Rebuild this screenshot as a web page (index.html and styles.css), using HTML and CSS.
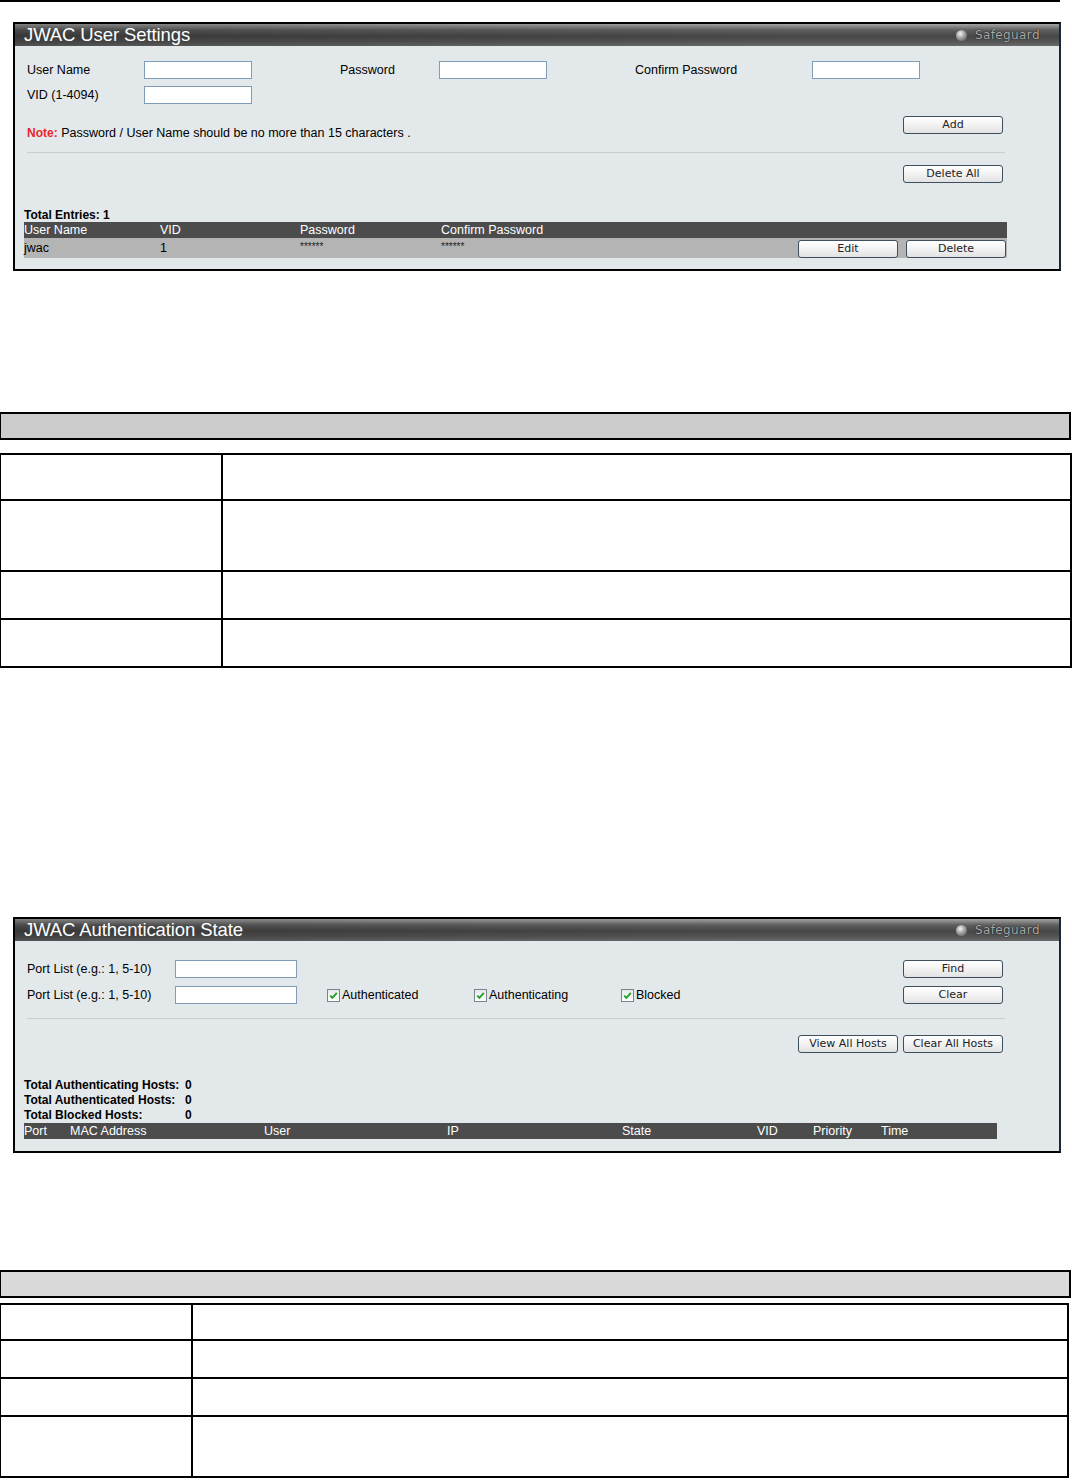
FILE: index.html
```html
<!DOCTYPE html>
<html>
<head>
<meta charset="utf-8">
<title>JWAC</title>
<link rel="stylesheet" href="styles.css">
</head>
<body>
<div class="topline"></div>

<section class="panel panel-users">
  <div class="titlebar">
    <span class="title">JWAC User Settings</span>
    <span class="safeguard"><span class="sg-dot"></span>Safeguard</span>
  </div>
  <div class="pbody">
    <div class="form-grid">
      <span class="lbl">User Name</span><span class="input"></span>
      <span class="lbl gap">Password</span><span class="input"></span>
      <span class="lbl gap">Confirm Password</span><span class="input"></span>
      <span class="lbl">VID (1-4094)</span><span class="input"></span>
    </div>
    <div class="note-row">
      <p class="note"><span class="note-key">Note:</span> Password / User Name should be no more than 15 characters .</p>
      <span class="btn">Add</span>
    </div>
    <div class="sep"></div>
    <div class="right-row first"><span class="btn">Delete All</span></div>
    <div class="total">Total Entries: 1</div>
    <div class="thead users-cols">
      <span>User Name</span><span>VID</span><span>Password</span><span>Confirm Password</span>
    </div>
    <div class="trow users-cols">
      <span>jwac</span><span>1</span><span class="stars">******</span><span class="stars">******</span>
      <span class="row-btns"><span class="btn">Edit</span><span class="btn">Delete</span></span>
    </div>
  </div>
</section>

<div class="dhead dhead-1"></div>
<div class="dtable dtable-1">
  <div class="dcell r1"></div><div class="dcell r1"></div>
  <div class="dcell r2"></div><div class="dcell r2"></div>
  <div class="dcell r3"></div><div class="dcell r3"></div>
  <div class="dcell r4"></div><div class="dcell r4"></div>
</div>

<section class="panel panel-state">
  <div class="titlebar">
    <span class="title">JWAC Authentication State</span>
    <span class="safeguard"><span class="sg-dot"></span>Safeguard</span>
  </div>
  <div class="pbody">
    <div class="state-grid">
      <span class="lbl">Port List (e.g.: 1, 5-10)</span><span class="input wide"></span>
      <span class="btn c-btn">Find</span>
      <span class="lbl">Port List (e.g.: 1, 5-10)</span><span class="input wide"></span>
      <span class="cb c-cb1"><span class="cb-box"><svg viewBox="0 0 11 11" width="11" height="11"><path d="M2.2 5.6 L4.4 7.9 L8.8 2.8" fill="none" stroke="#25a025" stroke-width="1.8"/></svg></span>Authenticated</span>
      <span class="cb"><span class="cb-box"><svg viewBox="0 0 11 11" width="11" height="11"><path d="M2.2 5.6 L4.4 7.9 L8.8 2.8" fill="none" stroke="#25a025" stroke-width="1.8"/></svg></span>Authenticating</span>
      <span class="cb"><span class="cb-box"><svg viewBox="0 0 11 11" width="11" height="11"><path d="M2.2 5.6 L4.4 7.9 L8.8 2.8" fill="none" stroke="#25a025" stroke-width="1.8"/></svg></span>Blocked</span>
      <span class="btn c-btn">Clear</span>
    </div>
    <div class="sep sep-2"></div>
    <div class="right-row second"><span class="btn">View All Hosts</span><span class="btn">Clear All Hosts</span></div>
    <div class="totals">
      <span>Total Authenticating Hosts:</span><span>0</span>
      <span>Total Authenticated Hosts:</span><span>0</span>
      <span>Total Blocked Hosts:</span><span>0</span>
    </div>
    <div class="thead hosts-cols">
      <span>Port</span><span>MAC Address</span><span>User</span><span>IP</span><span>State</span><span>VID</span><span>Priority</span><span>Time</span>
    </div>
  </div>
</section>

<div class="dhead dhead-2"></div>
<div class="dtable dtable-2">
  <div class="dcell s1"></div><div class="dcell s1"></div>
  <div class="dcell s2"></div><div class="dcell s2"></div>
  <div class="dcell s3"></div><div class="dcell s3"></div>
  <div class="dcell s4"></div><div class="dcell s4"></div>
</div>
</body>
</html>
```

FILE: styles.css
```css
* { box-sizing: border-box; }
html, body { margin: 0; padding: 0; background: #fff; }
body {
  width: 1073px;
  height: 1479px;
  overflow: hidden;
  font-family: "Liberation Sans", Arial, sans-serif;
  font-size: 12.5px;
  color: #000;
}

.topline { width: 1060px; height: 2px; background: #000; }

/* ---------- panels ---------- */
.panel {
  width: 1048px;
  margin-left: 13px;
  border: 2px solid #000;
  border-right-color: #16283a;
  background: #e3e8ea;
}
.panel-users { margin-top: 20px; }
.panel-state { margin-top: 249px; }

.titlebar {
  height: 22px;
  display: flex;
  align-items: center;
  justify-content: space-between;
  padding: 0 19px 0 9px;
  background:
    linear-gradient(to right, rgba(0,0,0,0.22), rgba(0,0,0,0) 75%),
    linear-gradient(#a4a4a4 0%, #5e5e5e 28%, #474747 55%, #555 80%, #6a6a6a 100%);
}
.title { color: #fff; font-size: 18.5px; line-height: 22px; letter-spacing: -0.1px; }
.safeguard {
  display: flex;
  align-items: center;
  gap: 8px;
  font-family: "DejaVu Sans", Verdana, sans-serif;
  font-size: 12px;
  letter-spacing: 0.4px;
  color: #a9a9a9;
  text-shadow: 0 0 1px #1a1a1a, 0 0 1px #1a1a1a;
}
.sg-dot {
  width: 11px;
  height: 11px;
  border-radius: 50%;
  background: radial-gradient(circle at 40% 35%, #f4f4f4 0%, #a0a0a0 45%, #4a4a4a 100%);
}

.pbody { padding: 0 52px 11px 9px; }
.panel-state .pbody { padding-bottom: 12px; }

.lbl { line-height: 18px; white-space: nowrap; }
.input {
  display: block;
  width: 108px;
  height: 18px;
  background: #fff;
  border: 1px solid #7f9db9;
}
.input.wide { width: 122px; }

.btn {
  display: block;
  width: 100px;
  height: 18px;
  border: 1px solid #3e4e5c;
  border-radius: 3px;
  background: linear-gradient(#ffffff, #f2f2f2 50%, #e2e2e2);
  font-family: "DejaVu Sans", Verdana, sans-serif;
  font-size: 11px;
  line-height: 16px;
  text-align: center;
  color: #222;
}

/* user settings form */
.form-grid {
  display: grid;
  grid-template-columns: 117px 108px 187px 108px 265px 108px;
  row-gap: 7px;
  margin: 15px 0 0 3px;
}
.form-grid .gap { padding-left: 88px; }

.note-row {
  display: flex;
  justify-content: space-between;
  align-items: flex-start;
  margin-top: 12px;
  padding: 0 4px 0 3px;
}
.note { margin: 10px 0 0; line-height: 14px; }
.note-key { color: #e8262b; font-weight: bold; font-size: 12px; }

.sep {
  height: 1px;
  background: #c8cdd0;
  margin: 12px 2px 0 3px;
}
.sep-2 { margin-top: 14px; }

.right-row {
  display: flex;
  justify-content: flex-end;
  gap: 5px;
  padding-right: 4px;
  margin-top: 12px;
}
.right-row.second { margin-top: 16px; }

.total { margin-top: 25px; font-weight: bold; font-size: 12px; line-height: 14px; }

.thead {
  display: grid;
  height: 16px;
  line-height: 16px;
  background: #4c4c4c;
  color: #fff;
  white-space: nowrap;
}
.users-cols { grid-template-columns: 136px 140px 141px 1fr auto; }
.trow {
  display: grid;
  height: 20px;
  line-height: 20px;
  background: #b4b4b4;
  align-items: center;
  padding-right: 1px;
}
.stars { font-size: 10px; line-height: 14px; align-self: start; margin-top: 2px; color: #222; }
.row-btns { display: flex; gap: 8px; align-self: end; }

/* state panel */
.state-grid {
  display: grid;
  grid-template-columns: 148px 122px 30px 147px 147px 1fr 100px;
  row-gap: 8px;
  margin: 19px 4px 0 3px;
  align-items: center;
}
.state-grid .c-btn { grid-column: 7; }
.state-grid .c-cb1 { grid-column: 4; }
.cb { display: flex; align-items: center; gap: 2px; white-space: nowrap; }
.cb-box {
  display: flex;
  align-items: center;
  justify-content: center;
  width: 13px;
  height: 13px;
  border: 1px solid #7c858c;
  background: linear-gradient(#e6e9eb, #ffffff);
}

.totals {
  display: grid;
  grid-template-columns: 161px auto;
  justify-content: start;
  margin-top: 25px;
  font-weight: bold;
  font-size: 12px;
  line-height: 15px;
}
.hosts-cols {
  grid-template-columns: 46px 194px 183px 175px 135px 56px 68px 1fr;
  margin-right: 10px;
}

/* ---------- description tables ---------- */
.dhead {
  height: 28px;
  border: 2px solid #000;
  border-left-width: 1px;
}
.dhead-1 { width: 1071px; margin-top: 141px; background: #cccccc; }
.dhead-2 { width: 1071px; margin-top: 117px; background: #d9d9d9; }

.dtable {
  display: grid;
  border-top: 2px solid #000;
  border-left: 1px solid #000;
}
.dtable-1 { width: 1072px; margin-top: 13px; grid-template-columns: 222px 1fr; }
.dtable-2 { width: 1069px; margin-top: 5px; grid-template-columns: 192px 1fr; }
.dcell { border-right: 2px solid #000; border-bottom: 2px solid #000; }
.r1 { height: 46px; }
.r2 { height: 71px; }
.r3 { height: 48px; }
.r4 { height: 48px; }
.s1 { height: 36px; }
.s2 { height: 38px; }
.s3 { height: 38px; }
.s4 { height: 61px; }
```
